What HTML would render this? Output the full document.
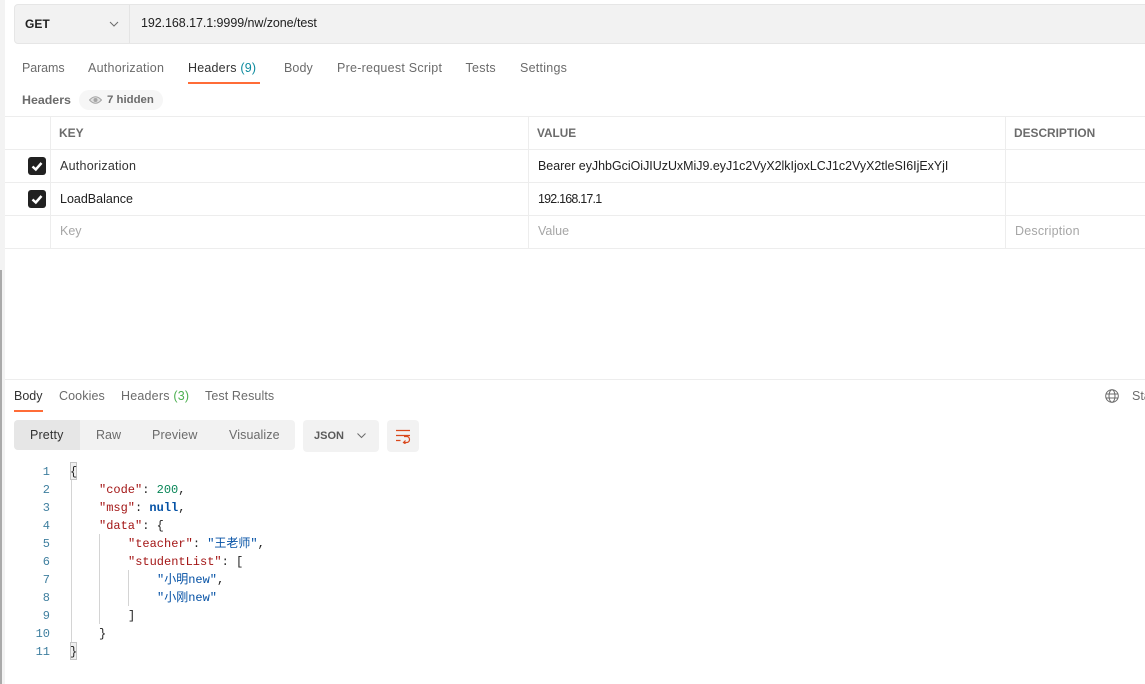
<!DOCTYPE html>
<html>
<head>
<meta charset="utf-8">
<style>
html,body{margin:0;padding:0;background:#fff}
body{width:1145px;height:684px;overflow:hidden;position:relative;font-family:"Liberation Sans","Noto Sans CJK SC",sans-serif;font-size:12.5px;color:#6b6b6b}
.a{position:absolute;white-space:nowrap}
.t{line-height:16px}
.w{letter-spacing:.25px}
.l{position:absolute;background:#ededed}
.m{font-family:"Liberation Mono","Noto Sans CJK SC",monospace;font-size:12px;line-height:18px;white-space:pre}
.n{position:absolute;width:50px;text-align:right;left:0;color:#3f7f9f;font-family:"Liberation Mono",monospace;font-size:12px;line-height:18px}
.cb{position:absolute;left:28px;width:18px;height:18px;background:#212121;border-radius:3px}
.g{position:absolute;background:#d4d4d4;width:1px}
.k{color:#a31515}.s{color:#0451a5}.d{color:#098658}.b{color:#0451a5;font-weight:bold}.p{color:#222}
</style>
</head>
<body>
<div class="a" style="left:0;top:0;width:5px;height:684px;background:#f3f3f3"></div>
<div class="a" style="left:0;top:270px;width:2px;height:414px;background:#aaa"></div>

<div class="a" style="left:14px;top:4px;width:1140px;height:38px;background:#f2f2f2;border:1px solid #e6e6e6;border-radius:4px"></div>
<div class="l" style="left:129px;top:5px;width:1px;height:38px;background:#e4e4e4"></div>
<div class="a t" style="left:25px;top:16px;font-weight:bold;color:#212121;font-size:12px">GET</div>
<svg class="a" style="left:109px;top:21px" width="10" height="7"><path d="M1 1 L5 5 L9 1" fill="none" stroke="#6b6b6b" stroke-width="1"/></svg>
<div class="a t" style="left:141px;top:15px;color:#212121;font-size:12.500px;letter-spacing:-.07px">192.168.17.1:9999/nw/zone/test</div>

<div class="a t" style="left:22px;top:60px;letter-spacing:-.1px">Params</div>
<div class="a t w" style="left:88px;top:60px">Authorization</div>
<div class="a t" style="left:188px;top:60px;color:#333;letter-spacing:.2px">Headers <span style="color:#0c8a9e">(9)</span></div>
<div class="a" style="left:188px;top:82px;width:72px;height:2px;background:#ff6c37"></div>
<div class="a t" style="left:284px;top:60px;letter-spacing:.1px">Body</div>
<div class="a t w" style="left:337px;top:60px">Pre-request Script</div>
<div class="a t w" style="left:465.500px;top:60px">Tests</div>
<div class="a t w" style="left:520px;top:60px">Settings</div>

<div class="a t" style="left:22px;top:92px;font-weight:bold;font-size:12.400px">Headers</div>
<div class="a" style="left:79px;top:90px;width:84px;height:20px;background:#f6f6f6;border-radius:10px"></div>
<svg class="a" style="left:89px;top:95px" width="13" height="10"><path d="M0.500 5 Q6.500 -1.500 12.500 5 Q6.500 11.500 0.500 5Z" fill="#e0e0e0" stroke="#a6a6a6" stroke-width="1"/><circle cx="6.500" cy="5" r="2" fill="#a6a6a6"/></svg>
<div class="a t" style="left:107px;top:92px;font-weight:bold;font-size:11.400px">7 hidden</div>

<div class="l" style="left:5px;top:116px;width:1140px;height:1px"></div>
<div class="l" style="left:5px;top:149px;width:1140px;height:1px"></div>
<div class="l" style="left:5px;top:182px;width:1140px;height:1px"></div>
<div class="l" style="left:5px;top:215px;width:1140px;height:1px"></div>
<div class="l" style="left:5px;top:248px;width:1140px;height:1px"></div>
<div class="l" style="left:50px;top:116px;width:1px;height:132px"></div>
<div class="l" style="left:528px;top:116px;width:1px;height:132px"></div>
<div class="l" style="left:1005px;top:116px;width:1px;height:132px"></div>

<div class="a t" style="left:59px;top:125px;font-weight:bold;font-size:12px">KEY</div>
<div class="a t" style="left:537px;top:125px;font-weight:bold;font-size:11.800px">VALUE</div>
<div class="a t" style="left:1014px;top:125px;font-weight:bold;font-size:11.900px">DESCRIPTION</div>

<div class="cb" style="top:157px"><svg width="18" height="18"><path d="M4.500 9.500 L7.800 12.500 L13.500 6" fill="none" stroke="#fff" stroke-width="2.500"/></svg></div>
<div class="cb" style="top:190px"><svg width="18" height="18"><path d="M4.500 9.500 L7.800 12.500 L13.500 6" fill="none" stroke="#fff" stroke-width="2.500"/></svg></div>
<div class="a t w" style="left:60px;top:158px;color:#333">Authorization</div>
<div class="a t" style="left:60px;top:191px;color:#212121">LoadBalance</div>
<div class="a t" style="left:60px;top:223px;color:#a6a6a6">Key</div>
<div class="a t" style="left:538px;top:158px;color:#212121;font-size:12.450px">Bearer eyJhbGciOiJIUzUxMiJ9.eyJ1c2VyX2lkIjoxLCJ1c2VyX2tleSI6IjExYjI</div>
<div class="a t" style="left:538px;top:191px;color:#212121;letter-spacing:-.8px">192.168.17.1</div>
<div class="a t" style="left:538px;top:223px;color:#a6a6a6">Value</div>
<div class="a t" style="left:1015px;top:223px;color:#a6a6a6;letter-spacing:.2px">Description</div>

<div class="l" style="left:5px;top:379px;width:1140px;height:1px"></div>
<div class="a t" style="left:14px;top:388px;color:#333">Body</div>
<div class="a" style="left:14px;top:410px;width:29px;height:2px;background:#ff6c37"></div>
<div class="a t" style="left:59px;top:388px;letter-spacing:.1px">Cookies</div>
<div class="a t" style="left:121px;top:388px;letter-spacing:.2px">Headers <span style="color:#4caf50">(3)</span></div>
<div class="a t" style="left:205px;top:388px;letter-spacing:.1px">Test Results</div>
<svg class="a" style="left:1105px;top:389px" width="14" height="14"><g fill="none" stroke="#6b6b6b" stroke-width="1"><circle cx="7" cy="7" r="6.300"/><ellipse cx="7" cy="7" rx="3" ry="6.300"/><path d="M1 5H13M1 9H13"/></g></svg>
<div class="a t" style="left:1132px;top:388px">Sta</div>

<div class="a" style="left:14px;top:420px;width:281px;height:30px;background:#f2f2f2;border-radius:4px"></div>
<div class="a" style="left:14px;top:420px;width:66px;height:30px;background:#e6e6e6;border-radius:4px 0 0 4px"></div>
<div class="a t" style="left:30px;top:427px;color:#333;letter-spacing:.15px">Pretty</div>
<div class="a t" style="left:96px;top:427px">Raw</div>
<div class="a t" style="left:152px;top:427px;letter-spacing:.15px">Preview</div>
<div class="a t" style="left:229px;top:427px;letter-spacing:.1px">Visualize</div>
<div class="a" style="left:303px;top:420px;width:76px;height:32px;background:#f2f2f2;border-radius:4px"></div>
<div class="a t" style="left:314px;top:428px;font-weight:bold;font-size:11px;color:#5a5a5a">JSON</div>
<svg class="a" style="left:356px;top:432px" width="11" height="8"><path d="M1.500 1.500 L5.500 5.500 L9.500 1.500" fill="none" stroke="#6b6b6b" stroke-width="1"/></svg>
<div class="a" style="left:387px;top:420px;width:32px;height:32px;background:#f2f2f2;border-radius:4px"></div>
<svg class="a" style="left:395px;top:429px" width="16" height="15"><path d="M1 1.500H15M1 6.500H15M1 11.500H5.500M9 13.500H11.500C15.500 13.500 15.500 7.500 11.500 7.500H9M10.500 11.500L8.500 13.500L10.500 14.800" fill="none" stroke="#d9481c" stroke-width="1.200"/></svg>

<div class="n" style="top:463px">1</div>
<div class="n" style="top:481px">2</div>
<div class="n" style="top:499px">3</div>
<div class="n" style="top:517px">4</div>
<div class="n" style="top:535px">5</div>
<div class="n" style="top:553px">6</div>
<div class="n" style="top:571px">7</div>
<div class="n" style="top:589px">8</div>
<div class="n" style="top:607px">9</div>
<div class="n" style="top:625px">10</div>
<div class="n" style="top:643px">11</div>

<div class="g" style="left:71px;top:480px;height:162px"></div>
<div class="g" style="left:99px;top:534px;height:90px"></div>
<div class="g" style="left:128px;top:570px;height:36px"></div>
<div class="a" style="left:70px;top:462px;width:5px;height:16px;background:#f0f0f0;border:1px solid #c4c4c4"></div>
<div class="a" style="left:70px;top:642px;width:5px;height:16px;background:#f0f0f0;border:1px solid #c4c4c4"></div>

<div class="a m p" style="left:70px;top:463px">{</div>
<div class="a m p" style="left:99px;top:481px"><span class="k">"code"</span>: <span class="d">200</span>,</div>
<div class="a m p" style="left:99px;top:499px"><span class="k">"msg"</span>: <span class="b">null</span>,</div>
<div class="a m p" style="left:99px;top:517px"><span class="k">"data"</span>: {</div>
<div class="a m p" style="left:128px;top:535px"><span class="k">"teacher"</span>: <span class="s">"王老师"</span>,</div>
<div class="a m p" style="left:128px;top:553px"><span class="k">"studentList"</span>: [</div>
<div class="a m p" style="left:157px;top:571px"><span class="s">"小明new"</span>,</div>
<div class="a m p" style="left:157px;top:589px"><span class="s">"小刚new"</span></div>
<div class="a m p" style="left:128px;top:607px">]</div>
<div class="a m p" style="left:99px;top:625px">}</div>
<div class="a m p" style="left:70px;top:643px">}</div>
</body>
</html>
